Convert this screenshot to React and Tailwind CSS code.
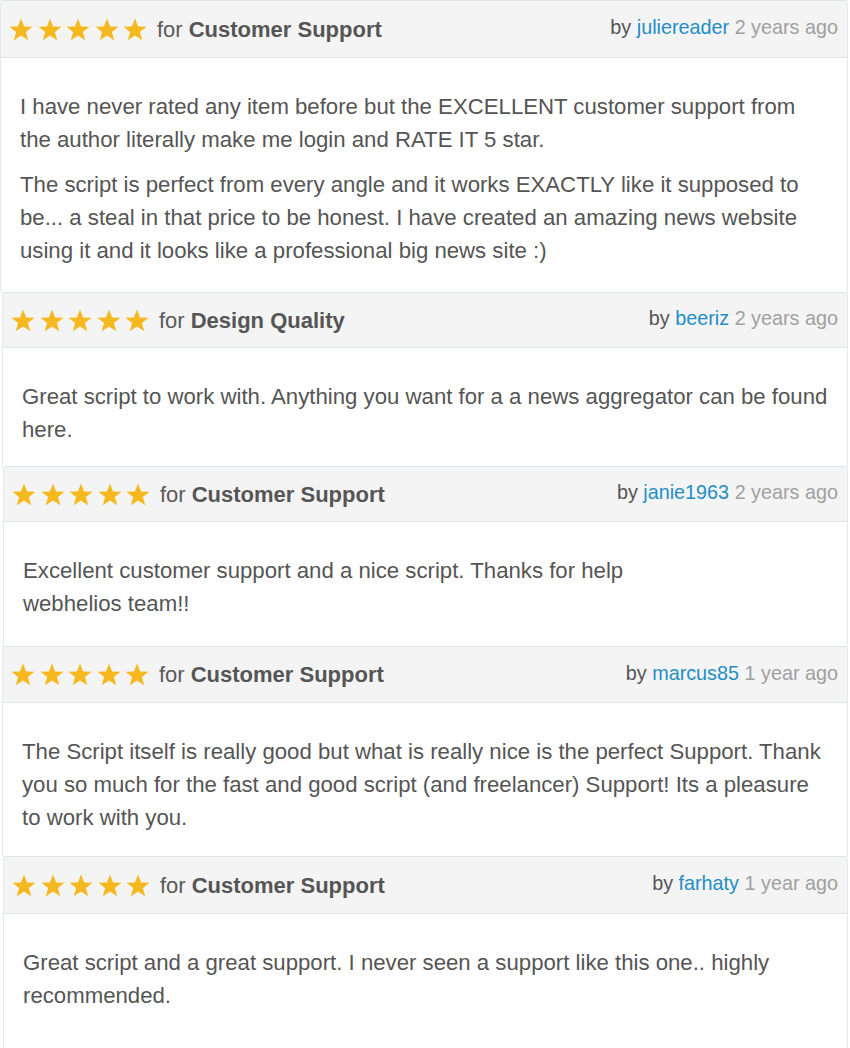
import React from "react";

const Star = () => (
  <svg width="24" height="23" viewBox="0 0 24 23" className="block">
    <polygon
      points="12,0.5 15.1,8.4 23.5,8.7 16.9,13.9 19.2,22.2 12,17.4 4.8,22.2 7.1,13.9 0.5,8.7 8.9,8.4"
      fill="#f6b81f"
    />
  </svg>
);

const reviews = [
  {
    cat: "Customer Support",
    user: "juliereader",
    when: "2 years ago",
    wrap: "ml-0",
    head: "h-[58px]",
    body: "h-[234px]",
    paras: [
      "I have never rated any item before but the EXCELLENT customer support from the author literally make me login and RATE IT 5 star.",
      "The script is perfect from every angle and it works EXACTLY like it supposed to be... a steal in that price to be honest. I have created an amazing news website using it and it looks like a professional big news site :)",
    ],
  },
  {
    cat: "Design Quality",
    user: "beeriz",
    when: "2 years ago",
    wrap: "ml-[2px]",
    head: "h-[56px]",
    body: "h-[118px]",
    paras: [
      "Great script to work with. Anything you want for a a news aggregator can be found here.",
    ],
  },
  {
    cat: "Customer Support",
    user: "janie1963",
    when: "2 years ago",
    wrap: "ml-[3px]",
    head: "h-[56px]",
    body: "h-[124px]",
    paras: [
      <>
        Excellent customer support and a nice script. Thanks for help
        <br />
        webhelios team!!
      </>,
    ],
  },
  {
    cat: "Customer Support",
    user: "marcus85",
    when: "1 year ago",
    wrap: "ml-[2px]",
    head: "h-[57px]",
    body: "h-[153px]",
    paras: [
      "The Script itself is really good but what is really nice is the perfect Support. Thank you so much for the fast and good script (and freelancer) Support! Its a pleasure to work with you.",
    ],
  },
  {
    cat: "Customer Support",
    user: "farhaty",
    when: "1 year ago",
    wrap: "ml-[3px]",
    head: "h-[58px]",
    body: "h-[140px]",
    paras: [
      "Great script and a great support. I never seen a support like this one.. highly recommended.",
    ],
  },
];

export default function App() {
  return (
    <div
      className="w-[850px] h-[1048px] overflow-hidden bg-white"
      style={{ fontFamily: '"Liberation Sans", Arial, sans-serif' }}
    >
      {reviews.map((r, i) => (
        <div
          key={i}
          className={`${r.wrap} mr-[2px] border-x border-[#e4e8ed] rounded-t-[3px]`}
        >
          <div
            className={`${r.head} flex items-center justify-between pl-[8px] pr-[9px] bg-[#f4f4f4] border-t border-b border-[#dfe5eb] text-[22px]`}
          >
            <div className="flex items-center">
              <div className="flex items-center gap-[4.5px] mr-[10px]">
                <Star />
                <Star />
                <Star />
                <Star />
                <Star />
              </div>
              <span className="text-[#5a5a5a]">for</span>
              <span className="ml-[6px] font-bold text-[#555]">{r.cat}</span>
            </div>
            <div className="text-[19.8px] mb-[2px]">
              <span className="text-[#555]">by </span>
              <span className="text-[#1f8ec4]">{r.user}</span>
              <span className="text-[#a0a0a0]"> {r.when}</span>
            </div>
          </div>
          <div
            className={`${r.body} bg-white pl-[19px] pr-[16px] pt-[32px] text-[22.2px] leading-[33px] text-[#555]`}
          >
            {r.paras.map((p, j) => (
              <p key={j} className={j > 0 ? "mt-[12px]" : ""}>
                {p}
              </p>
            ))}
          </div>
        </div>
      ))}
    </div>
  );
}
